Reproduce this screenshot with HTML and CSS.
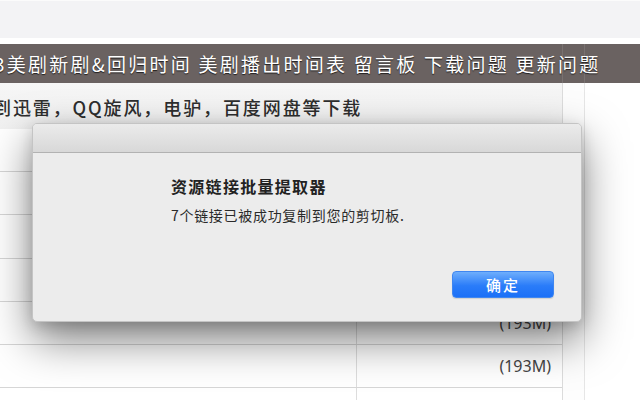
FILE: index.html
```html
<!DOCTYPE html>
<html lang="zh-CN">
<head>
<meta charset="utf-8">
<title>资源链接批量提取器</title>
<link rel="stylesheet" href="styles.css">
</head>
<body>
<div class="page">
  <div class="topbar"></div>
  <div class="nav"><span class="nav-text">3美剧新剧&amp;回归时间 美剧播出时间表 留言板 下载问题 更新问题</span></div>
  <div class="main">
    <div class="content">
      <div class="notice"><span class="notice-text">到迅雷，QQ旋风，电驴，百度网盘等下载</span></div>
      <div class="row"><div class="cell"></div><div class="cell size"></div></div>
      <div class="row"><div class="cell"></div><div class="cell size"></div></div>
      <div class="row"><div class="cell"></div><div class="cell size"></div></div>
      <div class="row"><div class="cell"></div><div class="cell size"></div></div>
      <div class="row"><div class="cell"></div><div class="cell size">(193M)</div></div>
      <div class="row"><div class="cell"></div><div class="cell size">(193M)</div></div>
      <div class="row"><div class="cell"></div><div class="cell size"></div></div>
    </div>
    <div class="gutter"></div>
    <div class="rest"></div>
  </div>

  <div class="dialog">
    <div class="dialog-titlebar"></div>
    <div class="dialog-body">
      <div class="dialog-title">资源链接批量提取器</div>
      <div class="dialog-msg">7个链接已被成功复制到您的剪切板.</div>
      <div class="dialog-actions"><button class="btn-primary">确定</button></div>
    </div>
  </div>
</div>
</body>
</html>
```

FILE: styles.css
```css
html, body {
  margin: 0;
  padding: 0;
  background: #ffffff;
}
body {
  width: 640px;
  height: 400px;
  overflow: hidden;
  font-family: "Noto Sans CJK SC", "Noto Sans", sans-serif;
}
.page {
  position: relative;
  width: 640px;
  height: 400px;
  overflow: hidden;
}
.topbar {
  height: 38px;
  background: #f3f3f5;
  border-top: 1px solid #fbfbfb;
  box-sizing: border-box;
  margin-bottom: 6px;
}
.nav {
  height: 39px;
  background:
    linear-gradient(to right, transparent 562px, rgba(255,255,255,0.10) 562px, rgba(255,255,255,0.10) 563px, transparent 563px),
    linear-gradient(to right, transparent 584px, rgba(255,255,255,0.10) 584px, rgba(255,255,255,0.10) 585px, transparent 585px),
    #6a6261;
  display: flex;
  align-items: center;
  overflow: hidden;
  white-space: nowrap;
}
.nav-text {
  margin-left: -6px;
  color: #ffffff;
  font-size: 19px;
  letter-spacing: 2.25px;
  line-height: 39px;
  text-shadow: 0 1px 1px rgba(0,0,0,0.7);
}
.main {
  display: flex;
  height: 317px;
}
.content {
  width: 562px;
  border-right: 1px solid #dcdcdc;
  flex: none;
}
.gutter {
  width: 21px;
  border-right: 1px solid #e6e6e6;
  flex: none;
  background: #fdfdfd;
}
.rest {
  flex: 1;
  background: #ffffff;
}
.notice {
  height: 46px;
  background: linear-gradient(#f6f6f6, #f1f1f1);
  white-space: nowrap;
  overflow: hidden;
}
.notice-text {
  display: block;
  margin-left: -7px;
  padding-top: 11px;
  font-size: 18px;
  font-weight: 500;
  line-height: 26px;
  letter-spacing: 1.9px;
  color: #2e2e2e;
}
.row {
  display: grid;
  grid-template-columns: 356px 1fr;
  height: 42.2px;
  border-bottom: 1px solid #d6d6d6;
  background: #ffffff;
}
.cell {
  display: flex;
  align-items: center;
}
.size {
  border-left: 1px solid #dddddd;
  justify-content: flex-end;
  padding-right: 11px;
  font-family: "Noto Sans", sans-serif;
  font-size: 16px;
  color: #444444;
}

/* dialog sheet */
.dialog {
  position: absolute;
  left: 32px;
  top: 123px;
  width: 550px;
  height: 199px;
  box-sizing: border-box;
  border: 1px solid #c4c4c4;
  border-radius: 5px;
  background: #ececec;
  box-shadow: 0 18px 44px rgba(0,0,0,0.5), 0 4px 14px rgba(0,0,0,0.15);
  overflow: hidden;
  display: flex;
  flex-direction: column;
}
.dialog-titlebar {
  height: 28px;
  flex: none;
  background: linear-gradient(#ebebeb, #d8d8d8);
  border-bottom: 1px solid #b2b2b2;
}
.dialog-body {
  flex: 1;
  padding: 22px 27px 0 138px;
  display: flex;
  flex-direction: column;
}
.dialog-title {
  font-size: 16px;
  font-weight: 700;
  letter-spacing: 1.3px;
  line-height: 22px;
  color: #222222;
}
.dialog-msg {
  margin-top: 8px;
  font-size: 14px;
  letter-spacing: 0.7px;
  line-height: 20px;
  color: #2a2a2a;
}
.dialog-actions {
  margin-top: 46px;
  display: flex;
  justify-content: flex-end;
}
.btn-primary {
  width: 102px;
  height: 27px;
  border: 1px solid #3f86f0;
  border-radius: 4px;
  background: linear-gradient(#6eaefc, #2a7cf9 55%, #1b70f7);
  color: #ffffff;
  font-family: "Noto Sans CJK SC", sans-serif;
  font-size: 15px;
  font-weight: 500;
  letter-spacing: 2px;
  line-height: 25px;
  padding: 0;
  box-shadow: 0 1px 1px rgba(0,0,0,0.12);
}
```
